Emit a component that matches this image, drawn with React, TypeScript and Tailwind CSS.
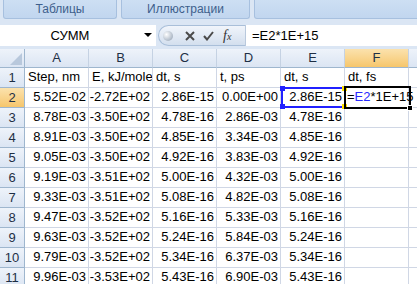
import React from 'react';

const cols = ['A', 'B', 'C', 'D', 'E', 'F', ''];

const header = ['Step, nm', 'E, kJ/mole', 'dt, s', 't, ps', 'dt, s', 'dt, fs'];

const data: string[][] = [
  ['5.52E-02', '-2.72E+02', '2.86E-15', '0.00E+00', '2.86E-15'],
  ['8.78E-03', '-3.50E+02', '4.78E-16', '2.86E-03', '4.78E-16'],
  ['8.91E-03', '-3.50E+02', '4.85E-16', '3.34E-03', '4.85E-16'],
  ['9.05E-03', '-3.50E+02', '4.92E-16', '3.83E-03', '4.92E-16'],
  ['9.19E-03', '-3.51E+02', '5.00E-16', '4.32E-03', '5.00E-16'],
  ['9.33E-03', '-3.51E+02', '5.08E-16', '4.82E-03', '5.08E-16'],
  ['9.47E-03', '-3.52E+02', '5.16E-16', '5.33E-03', '5.16E-16'],
  ['9.63E-03', '-3.52E+02', '5.24E-16', '5.84E-03', '5.24E-16'],
  ['9.79E-03', '-3.52E+02', '5.34E-16', '6.37E-03', '5.34E-16'],
  ['9.96E-03', '-3.53E+02', '5.43E-16', '6.90E-03', '5.43E-16'],
];

const RibbonGroup = ({ label, width }: { label: string; width: string }) => (
  <div
    className={`${width} h-[19px] shrink-0 rounded-b-[3px] border border-t-0 border-[#a7c0df] bg-gradient-to-b from-[#cddff3] to-[#c1d6ef] flex items-center justify-center text-[12px] text-[#3e5f8c]`}
  >
    {label}
  </div>
);

const FormulaBar = () => (
  <div className="h-[25px] bg-[#dbe6f4] flex items-start">
    <div className="h-[21px] mt-[1px] w-[156px] bg-white flex items-center relative">
      <span className="w-[140px] text-center text-[13px] text-black">СУММ</span>
      <span className="absolute left-[144px] top-[8px] w-0 h-0 border-l-[4px] border-r-[4px] border-t-[4px] border-l-transparent border-r-transparent border-t-black" />
    </div>
    <div className="h-[21px] mt-[1px] w-[87px] ml-[2px] rounded-l-full border border-r-0 border-[#a9bfd9] bg-gradient-to-b from-[#f1f5fb] to-[#d3dfee] flex items-center">
      <span className="ml-[4px] w-[10px] h-[10px] rounded-full bg-[radial-gradient(circle_at_35%_35%,#ffffff,#b9c3cf_60%,#8e9aab)]" />
      <svg className="ml-[12px]" width="10" height="10" viewBox="0 0 10 10">
        <path d="M1 1 L9 9 M9 1 L1 9" stroke="#4a4a4a" strokeWidth="2" />
      </svg>
      <svg className="ml-[8px]" width="11" height="10" viewBox="0 0 11 10">
        <path d="M1 5 L4 8.5 L10 1" stroke="#4a4a4a" strokeWidth="2" fill="none" />
      </svg>
      <span className="ml-[9px] font-['Liberation_Serif',serif] italic text-[14px] text-[#333] leading-none">
        f<span className="text-[10px]">x</span>
      </span>
    </div>
    <div className="h-[21px] mt-[1px] flex-1 bg-white border-l border-[#b9c9dd] flex items-center pl-[6px] text-[13px] text-black">
      =E2*1E+15
    </div>
  </div>
);

export default function App() {
  const headCls =
    'flex items-center justify-center border-r border-b border-[#9eb6ce] text-[13px] text-[#1e2f45]';
  const blueHead = 'bg-gradient-to-b from-[#eef3fa] to-[#dbe5f3]';
  const orangeHead = 'bg-gradient-to-b from-[#fbe2ad] to-[#f6c66b]';
  const cell = 'border-r border-b border-[#d0d7e5] overflow-hidden whitespace-nowrap flex items-end pb-[1px] text-[13px] text-black';

  return (
    <div className="w-[417px] h-[284px] overflow-hidden bg-white font-['Liberation_Sans',Arial,sans-serif]">
      <div className="h-[24px] bg-[#dbe6f4] flex gap-[4px] pl-[3px]">
        <RibbonGroup label="Таблицы" width="w-[114px]" />
        <RibbonGroup label="Иллюстрации" width="w-[129px]" />
        <RibbonGroup label="" width="w-[170px]" />
      </div>
      <FormulaBar />
      <div className="relative grid grid-cols-[25px_repeat(6,64px)_64px] grid-rows-[19px_repeat(11,20px)]">
        <div className="border-r border-b border-[#9eb6ce] bg-gradient-to-b from-[#eef3fa] to-[#dbe5f3] relative">
          <svg className="absolute right-[2px] bottom-[2px]" width="12" height="12" viewBox="0 0 12 12">
            <polygon points="12,0 12,12 0,12" fill="#b8c8dc" />
          </svg>
        </div>
        {cols.map((c, i) => (
          <div key={i} className={`${headCls} border-r-[#c5d2e3] ${c === 'F' ? orangeHead : blueHead}`}>
            {c}
          </div>
        ))}

        <div className={`${headCls} ${blueHead}`}>1</div>
        {header.map((h, i) => (
          <div key={i} className={`${cell} pl-[3px]`}>
            {h}
          </div>
        ))}
        <div className={cell} />

        {data.map((r, ri) => (
          <React.Fragment key={ri}>
            <div className={`${headCls} ${ri === 0 ? orangeHead : blueHead}`}>{ri + 2}</div>
            {r.map((v, ci) => (
              <div key={ci} className={`${cell} justify-end pr-[2px]`}>
                {v}
              </div>
            ))}
            {ri === 0 ? (
              <div className="border-r border-b border-[#d0d7e5] whitespace-nowrap flex items-end pb-[1px] pl-[2px] text-[13px] text-black">
                =<span className="text-[#2a2aff]">E2</span>*1E+15
              </div>
            ) : (
              <div className={cell} />
            )}
            <div className={cell} />
          </React.Fragment>
        ))}

        {/* E2 reference highlight */}
        <div className="absolute left-[281px] top-[38px] w-[65px] h-[21px] border-[2px] border-[#2020ff] pointer-events-none">
          <span className="absolute -left-[3px] -top-[3px] w-[5px] h-[5px] bg-[#2020ff]" />
          <span className="absolute -right-[3px] -top-[3px] w-[5px] h-[5px] bg-[#ffe000]" />
          <span className="absolute -left-[3px] -bottom-[3px] w-[5px] h-[5px] bg-[#2020ff]" />
          <span className="absolute -right-[3px] -bottom-[3px] w-[5px] h-[5px] bg-[#ffe000]" />
        </div>
        {/* F2 active cell */}
        <div className="absolute left-[344px] top-[37px] w-[67px] h-[23px] border-[2px] border-black pointer-events-none">
          <span className="absolute -right-[4px] -bottom-[4px] w-[6px] h-[6px] bg-black border border-white" />
        </div>
      </div>
    </div>
  );
}
